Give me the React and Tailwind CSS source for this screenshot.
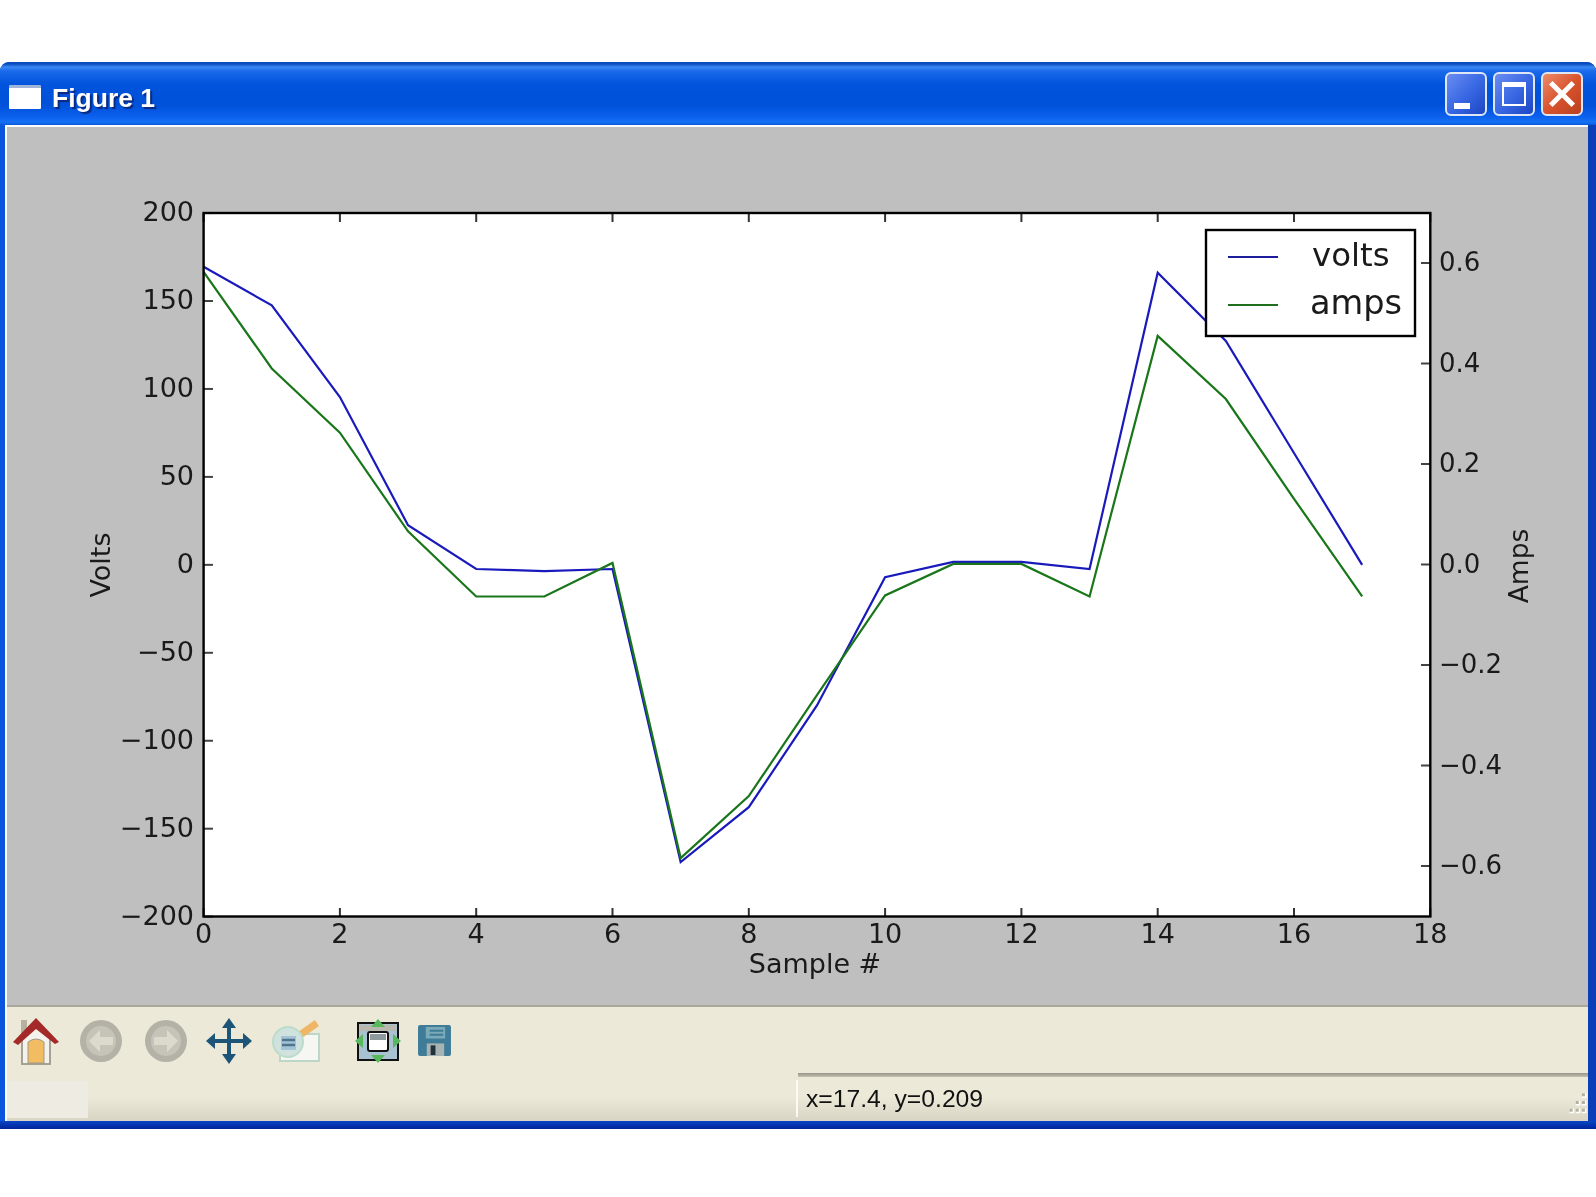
const k = 1.0179;

// sample values read off the plot, as y pixels
const volts = [262, 300, 390, 516, 559, 561, 559, 847, 793, 693, 567, 552, 552, 559, 268, 335, 445, 555];
const amps = [267, 362, 425, 522, 586, 586, 553, 843, 782, 683, 585, 554, 554, 586, 330, 392, 490, 586];

const xOf = (v) => 203.6 + v * 68.15;
const toPoints = (arr) => arr.map((y, i) => `${xOf(i)},${y * k}`).join(" ");

const xTicks = [0, 2, 4, 6, 8, 10, 12, 14, 16, 18];
const voltTicks = [200, 150, 100, 50, 0, -50, -100, -150, -200];
const ampTicks = [0.6, 0.4, 0.2, 0, -0.2, -0.4, -0.6];

const minus = (s) => String(s).replace("-", "\u2212");

function Chart() {
  return (
    <svg viewBox="7 127 1581 878" className="block w-full h-full font-['DejaVu_Sans',sans-serif] blur-[0.55px]">
      <rect x="203.6" y="213" width="1226.7" height="703.5" fill="#fff" />
      <polyline points={toPoints(volts)} fill="none" stroke="#1a1abc" strokeWidth="2.2" />
      <polyline points={toPoints(amps)} fill="none" stroke="#1a761a" strokeWidth="2.2" />

      {xTicks.map((t) => (
        <g key={t}>
          <line x1={xOf(t)} x2={xOf(t)} y1="213" y2="222" stroke="#333" strokeWidth="2" />
          <line x1={xOf(t)} x2={xOf(t)} y1="908" y2="917" stroke="#333" strokeWidth="2" />
          <text x={xOf(t)} y="943" textAnchor="middle" fontSize="27" fill="#1a1a1a">{t}</text>
        </g>
      ))}
      {voltTicks.map((t) => {
        const y = 564.85 - t * 1.759;
        return (
          <g key={t}>
            <line x1="204" x2="213" y1={y} y2={y} stroke="#444" strokeWidth="2" />
            <text x="194" y={y + 8} textAnchor="end" fontSize="27" fill="#1a1a1a">{minus(t)}</text>
          </g>
        );
      })}
      {ampTicks.map((t) => {
        const y = 564.5 - t * 502.5;
        return (
          <g key={t}>
            <line x1="1421" x2="1430" y1={y} y2={y} stroke="#444" strokeWidth="2" />
            <text x="1439" y={y + 8} fontSize="26" fill="#1a1a1a">{minus(t.toFixed(1))}</text>
          </g>
        );
      })}

      <rect x="203.6" y="213" width="1226.7" height="703.5" fill="none" stroke="#000" strokeWidth="2.4" />

      <rect x="1206" y="230" width="209" height="106" fill="#fff" stroke="#000" strokeWidth="2.4" />
      <line x1="1228" x2="1278" y1="257" y2="257" stroke="#1c1c9c" strokeWidth="2" />
      <line x1="1228" x2="1278" y1="305" y2="305" stroke="#1e6e1e" strokeWidth="2" />
      <text x="1312" y="266" fontSize="32.4" fill="#1a1a1a">volts</text>
      <text x="1310" y="314" fontSize="33.6" fill="#1a1a1a">amps</text>

      <text x="815" y="973" textAnchor="middle" fontSize="27" fill="#1a1a1a">Sample #</text>
      <text transform="translate(110 565) rotate(-90)" textAnchor="middle" fontSize="27" fill="#1a1a1a">Volts</text>
      <text transform="translate(1528 566) rotate(-90)" textAnchor="middle" fontSize="26.5" fill="#1a1a1a">Amps</text>
    </svg>
  );
}

function HomeIcon() {
  return (
    <svg viewBox="0 0 46 48" className="w-[46px] h-[48px]">
      <path d="M8 3h6v14l-6 6z" fill="#b5b0a0" />
      <path d="M9 20 23 8l14 12v27H9z" fill="#f4f2ec" stroke="#a5a295" strokeWidth="2" />
      <path d="M15 46V25q8-6 16 0v21z" fill="#f2bd62" stroke="#a09a86" strokeWidth="1" />
      <path d="M0 25 23 1l23 24-4 2L23 12 5 28z" fill="#a32a28" />
    </svg>
  );
}

function NavIcon({ flip }) {
  return (
    <svg viewBox="0 0 44 44" className={flip ? "w-[44px] h-[44px] -scale-x-100" : "w-[44px] h-[44px]"}>
      <circle cx="22" cy="22" r="21" fill="#b4b1a6" />
      <circle cx="22" cy="22" r="15" fill="#c6c3b8" />
      <path d="M10 22 21 11v7h13v8H21v7z" fill="#dcdacd" />
    </svg>
  );
}

function MoveIcon() {
  return (
    <svg viewBox="0 0 48 46" className="w-[48px] h-[46px]">
      <path d="M22 10h4v11h12v-6l9 8-9 8v-6H26v11h5l-7 10-7-10h5V25H10v6l-9-8 9-8v6h12V10h-5l7-10 7 10z" fill="#1d5578" />
    </svg>
  );
}

function ConfigIcon() {
  return (
    <svg viewBox="0 0 50 44" className="w-[50px] h-[44px]">
      <path d="M9 15h39v27H9z" fill="#f6f7f2" stroke="#bcd6c8" strokeWidth="2" />
      <path d="M27 13 44 1l4 6-17 12z" fill="#f0b667" />
      <circle cx="17" cy="23" r="15" fill="#cfe2de" stroke="#bcdccb" strokeWidth="2" />
      <rect x="10" y="17" width="15" height="14" fill="#a3c3d6" />
      <path d="M11 21h13M11 26h13" stroke="#50748e" strokeWidth="2.5" />
    </svg>
  );
}

function SubplotIcon() {
  return (
    <svg viewBox="0 0 46 44" className="w-[46px] h-[44px]">
      <rect x="3" y="4" width="40" height="37" fill="#a9c2d2" stroke="#111" strokeWidth="2" />
      <rect x="5" y="6" width="36" height="6" fill="#b9b8ae" />
      <rect x="13" y="13" width="20" height="19" rx="2" fill="#fff" stroke="#111" strokeWidth="2" />
      <rect x="15" y="15" width="16" height="6" fill="#8f9a9f" />
      <path d="M23 0l7 8H16zM23 44l-7-8h14zM0 22l8-7v14zM46 22l-8 7V15z" fill="#57b85e" />
    </svg>
  );
}

function SaveIcon() {
  return (
    <svg viewBox="0 0 34 32" className="w-[33px] h-[31px]">
      <path d="M2 0h30a2 2 0 0 1 2 2v28a2 2 0 0 1-2 2H2a2 2 0 0 1-2-2V2a2 2 0 0 1 2-2z" fill="#3e7c97" />
      <path d="M8 2h20v12H8z" fill="#7aa9b8" />
      <path d="M12 6h14M12 10h14" stroke="#3e7c97" strokeWidth="2" />
      <path d="M9 19h18v13H9z" fill="#a8b4b4" />
      <rect x="13" y="21" width="5" height="10" fill="#24323a" />
    </svg>
  );
}

function Grip() {
  const dots = [[9, 0], [9, 5], [5, 5], [9, 10], [5, 10], [1, 10]];
  return (
    <svg viewBox="0 0 13 14" className="w-[20px] h-[22px] self-end mb-[2px]">
      {dots.map(([x, y]) => (
        <rect key={`${x}-${y}`} x={x} y={y} width="3" height="3" fill="#fff" />
      ))}
      {dots.map(([x, y]) => (
        <rect key={`s${x}-${y}`} x={x} y={y} width="2" height="2" fill="#b4b1a2" />
      ))}
    </svg>
  );
}

function CaptionButton({ children, close }) {
  return (
    <div
      className={
        close
          ? "w-[42px] h-[44px] rounded-[6px] border-2 border-[#dfe6f5] flex items-center justify-center bg-gradient-to-br from-[#ec8a68] via-[#d9532e] to-[#b8401f]"
          : "w-[42px] h-[44px] rounded-[6px] border-2 border-[#dfe6f5] flex items-center justify-center bg-gradient-to-br from-[#6a8cf0] via-[#3a69e4] to-[#1d45c4]"
      }
    >
      {children}
    </div>
  );
}

export default function App() {
  return (
    <div className="w-[1596px] h-[1197px] bg-white pt-[62px] overflow-hidden">
      <div className="h-[1067px] flex flex-col rounded-t-[9px] bg-gradient-to-r from-[#0a55dd] via-[#0a55dd] to-[#0a3fb8] overflow-hidden">
        {/* title bar */}
        <div className="h-[63px] shrink-0 flex items-center pl-[9px] pr-[13px] bg-[linear-gradient(to_bottom,#0a4cc0_0,#0a4cc0_2px,#3a88f2_5px,#1a6aea_9px,#0254dc_22px,#0050d8_42px,#0a5fec_54px,#1670f4_60px,#0a58dc_63px)]">
          <div className="w-[32px] h-[24px] mt-[6px] bg-white border-t-[3px] border-[#9fb4d8] rounded-[1px]" />
          <span className="ml-[11px] mt-[9px] text-[26.5px] leading-none font-bold text-white font-['Liberation_Sans',sans-serif] blur-[0.3px] [text-shadow:2px_2px_1px_#0a2a80]">
            Figure 1
          </span>
          <div className="ml-auto flex gap-[6px] mt-[1px]">
            <CaptionButton>
              <div className="w-[16px] h-[6px] bg-white mt-[24px] mr-[8px]" />
            </CaptionButton>
            <CaptionButton>
              <div className="w-[24px] h-[24px] border-2 border-t-[5px] border-white" />
            </CaptionButton>
            <CaptionButton close>
              <svg viewBox="0 0 24 24" className="w-[30px] h-[30px]">
                <path d="M3 3 21 21M21 3 3 21" stroke="#fff" strokeWidth="4" />
              </svg>
            </CaptionButton>
          </div>
        </div>

        <div className="flex-1 min-h-0 flex flex-col ml-[5px] mr-[8px] border-l-2 border-white">
          <div className="h-[2px] shrink-0 bg-white" />

          {/* figure */}
          <div className="h-[878px] shrink-0 bg-[#bfbfbf]">
            <Chart />
          </div>

          {/* toolbar */}
          <div className="h-[68px] shrink-0 bg-[#ece9d8] border-t-2 border-[#aaa89a]">
            <div className="h-[66px] flex items-center pl-[6px] pt-[1px] blur-[0.4px]">
              <HomeIcon />
              <div className="ml-[20px]"><NavIcon /></div>
              <div className="ml-[21px]"><NavIcon flip /></div>
              <div className="ml-[17px]"><MoveIcon /></div>
              <div className="ml-[18px]"><ConfigIcon /></div>
              <div className="ml-[34px]"><SubplotIcon /></div>
              <div className="ml-[17px]"><SaveIcon /></div>
            </div>
          </div>

          {/* status bar */}
          <div className="flex-1 min-h-0 flex bg-gradient-to-b from-[#ece9d8] via-[#ece9d8] to-[#d8d5c4]">
            <div className="w-[81px] mt-[8px] mb-[3px] bg-[#eeece2]" />
            <div className="ml-[708px] flex-1 min-w-0 flex flex-col">
              <div className="h-[4px] shrink-0 bg-gradient-to-b from-[#98958a] to-[#c4c1b2] ml-[2px]" />
              <div className="flex-1 min-h-0 flex mt-[3px] mb-[4px] border-l-2 border-[#fbfaf5]">
                <span className="ml-[8px] text-[24.7px] leading-[38px] text-[#111] font-['Liberation_Sans',sans-serif] blur-[0.3px]">
                  x=17.4, y=0.209
                </span>
                <div className="ml-auto flex">
                  <Grip />
                </div>
              </div>
            </div>
          </div>
        </div>

        {/* bottom frame edge */}
        <div className="h-[8px] shrink-0 bg-gradient-to-b from-[#0a46c4] to-[#00239c]" />
      </div>
    </div>
  );
}
